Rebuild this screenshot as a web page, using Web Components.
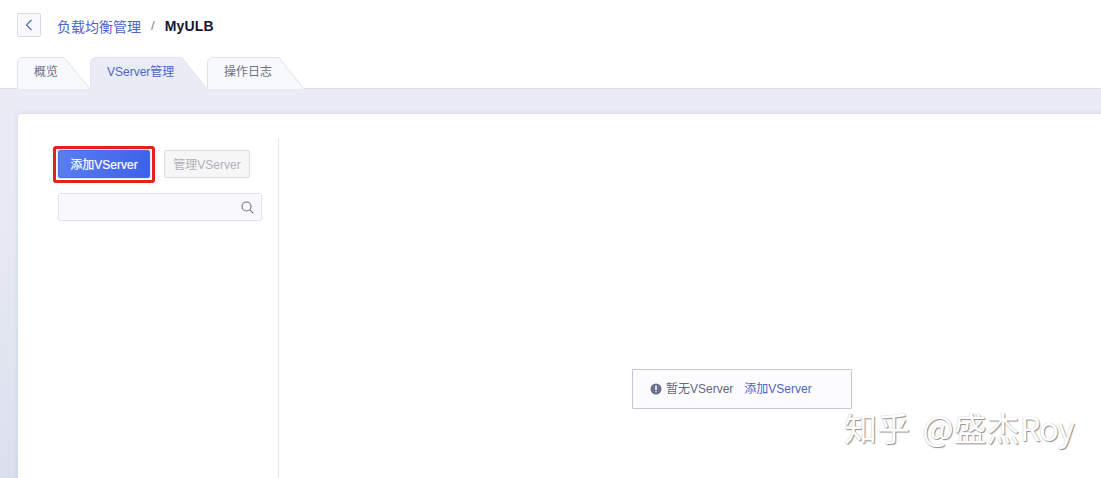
<!DOCTYPE html>
<html lang="zh"><head><meta charset="utf-8"><title>MyULB</title>
<style>
html,body{margin:0;padding:0;height:100%;overflow:hidden;background:#fff}
body{font:12px "Liberation Sans","Noto Sans CJK SC",sans-serif;width:1101px;height:478px;position:relative}
</style></head><body>
<lb-page>
  <lb-header slot="header" title-text="负载均衡管理" current="MyULB"></lb-header>
  <lb-tabs slot="tabs">
    <lb-tab w="73" slant="25" label="概览"></lb-tab>
    <lb-tab w="117" slant="24" label="VServer管理" active></lb-tab>
    <lb-tab w="97" slant="24" label="操作日志"></lb-tab>
  </lb-tabs>
  <lb-card slot="card">
    <lb-sidebar slot="side"></lb-sidebar>
    <lb-empty slot="main"></lb-empty>
  </lb-card>
</lb-page>
<lb-watermark></lb-watermark>
<script>
function def(name,html){
  customElements.define(name,class extends HTMLElement{
    connectedCallback(){
      if(this.shadowRoot)return;
      const r=this.attachShadow({mode:'open'});
      r.innerHTML=typeof html==='function'?html(this):html;
    }
  });
}
def('lb-page',`<style>:host{display:flex;flex-direction:column;height:478px;overflow:hidden}
.top{background:#fff;height:88px;flex:none}
.body{flex:1;background:linear-gradient(180deg,#e9ecf5 0,#e6e9f3 40%,#dce0ed 100%);border-top:1px solid #dcdfeb;padding:25px 0 0 18px;min-height:0}
</style><div class="top"><slot name="header"></slot><slot name="tabs"></slot></div>
<div class="body"><slot name="card"></slot></div>`);
def('lb-header',h=>`<style>:host{display:flex;align-items:center;height:57px;padding:0 0 7px 17px;box-sizing:border-box}
.back{width:24px;height:24px;box-sizing:border-box;border:1px solid #d7dbec;border-radius:2px;background:#f9f9fd;display:flex;align-items:center;justify-content:center;margin-right:16px}
.t{display:flex;align-items:center;padding-top:1px}
a{color:#4f62c4;font-size:14px}
.s{color:#7f8394;margin:0 10px 0 10px;font-size:13px}
b{color:#13172e;font-size:14px;font-weight:700;letter-spacing:.2px}</style>
<span class="back"><svg width="8" height="12" viewBox="0 0 8 12"><path d="M6.500 1 1.500 6l5 5" fill="none" stroke="#5468cc" stroke-width="1.200"/></svg></span>
<span class="t"><a>${h.getAttribute('title-text')}</a><span class="s">/</span><b>${h.getAttribute('current')}</b></span>`);
def('lb-tabs',`<style>:host{display:flex;height:31px;padding-left:17px;align-items:flex-end}</style><slot></slot>`);
def('lb-tab',h=>{
  const w=+h.getAttribute('w'),sl=+h.getAttribute('slant'),a=h.hasAttribute('active');
  const fill=a?'#e9ecf5':'#f8f9fc',st=a?'#e2e5f1':'#dfe2ee';
  return `<style>:host{display:block;position:relative;width:${w}px;height:31px;box-sizing:border-box;padding:0 0 0 17px;line-height:31px;font-size:12px;color:${a?'#4f66c9':'#6f7280'}}
svg{position:absolute;left:0;top:0}span{position:relative}</style>
<svg width="${w}" height="32" viewBox="0 0 ${w} 32"><path d="M.5 32V6A5.500 5.500 0 0 1 6 .5H${w-sl-1}L${w-.5} 31.500V32" fill="${fill}" stroke="${st}"/></svg>
<span>${h.getAttribute('label')}</span>`});
def('lb-card',`<style>:host{display:flex;width:1300px;height:500px;background:#fff;border-radius:4px 0 0 0;padding-top:24px;box-sizing:border-box;box-shadow:0 0 4px rgba(150,160,200,.35)}</style>
<slot name="side"></slot><slot name="main"></slot>`);
def('lb-btn',h=>{const p=h.hasAttribute('primary');return `<style>:host{display:inline-flex;align-items:center;justify-content:center;box-sizing:border-box;height:28px;padding-bottom:2px;width:${h.getAttribute('w')}px;border-radius:2px;font-size:12px;
${p?'color:#fff;-webkit-text-stroke:.2px #fff;background:linear-gradient(100deg,#5a7df2,#3c62e9);border:1px solid #4c6fe8;box-shadow:0 0 0 1px #dfe5fb':'color:#b0b2b9;background:#f6f6f7;border:1px solid #dcdde2'}}</style><slot></slot>`});
def('lb-sidebar',`<style>:host{display:block;box-sizing:border-box;width:261px;height:400px;border-right:1px solid #e4e6ef;padding:12px 0 0 40px}
.row{display:flex;gap:14px}
.mark{position:relative;display:flex}
.mark::after{content:"";position:absolute;left:-5px;right:-5px;top:-4px;bottom:-5px;border:3px solid #e2231a;border-radius:3px}
.search{margin-top:15px;width:204px;height:28px;box-sizing:border-box;background:#f9f9fd;border:1px solid #dfe2ee;border-radius:2px;display:flex;align-items:center;justify-content:flex-end;padding-right:8px}
.search svg{margin-right:-1px}
</style><div class="row"><span class="mark"><lb-btn primary w="92">添加VServer</lb-btn></span><lb-btn w="86">管理VServer</lb-btn></div>
<div class="search"><svg width="13" height="13" viewBox="0 0 13 13" fill="none" stroke="#6e7381" stroke-width="1.100"><circle cx="5.500" cy="5.500" r="4.500"/><path d="M8.800 8.800 12.300 12.300"/></svg></div>`);
def('lb-empty',`<style>:host{display:block;padding:231px 0 0 353px}
.box{width:220px;height:40px;box-sizing:border-box;border:1px solid #c3c7d8;border-radius:1px;background:#fcfcfe;display:flex;align-items:center;padding-left:17px;font-size:12px;color:#666a78}
svg{margin-right:4px;flex:none}.t{padding-bottom:3px}a{color:#4f62c4;margin-left:11px}</style>
<div class="box"><svg width="12" height="12" viewBox="0 0 12 12"><circle cx="6" cy="6" r="5.500" fill="#67708a"/><rect x="5.200" y="2.500" width="1.600" height="4.500" rx=".6" fill="#fff"/><rect x="5.200" y="8" width="1.600" height="1.600" rx=".8" fill="#fff"/></svg><span class="t">暂无VServer<a>添加VServer</a></span></div>`);
def('lb-watermark',`<style>:host{position:absolute;left:844px;top:405px;font:33px "Noto Sans CJK SC","Liberation Sans",sans-serif;line-height:44px;color:#fff;white-space:nowrap;text-shadow:1px 1px 1px #8f8f8f,0 0 1px #b5b5b5;word-spacing:5px}
span{letter-spacing:-1.300px}</style>知乎 @盛杰<span>Roy</span>`);
</script>
</body></html>
